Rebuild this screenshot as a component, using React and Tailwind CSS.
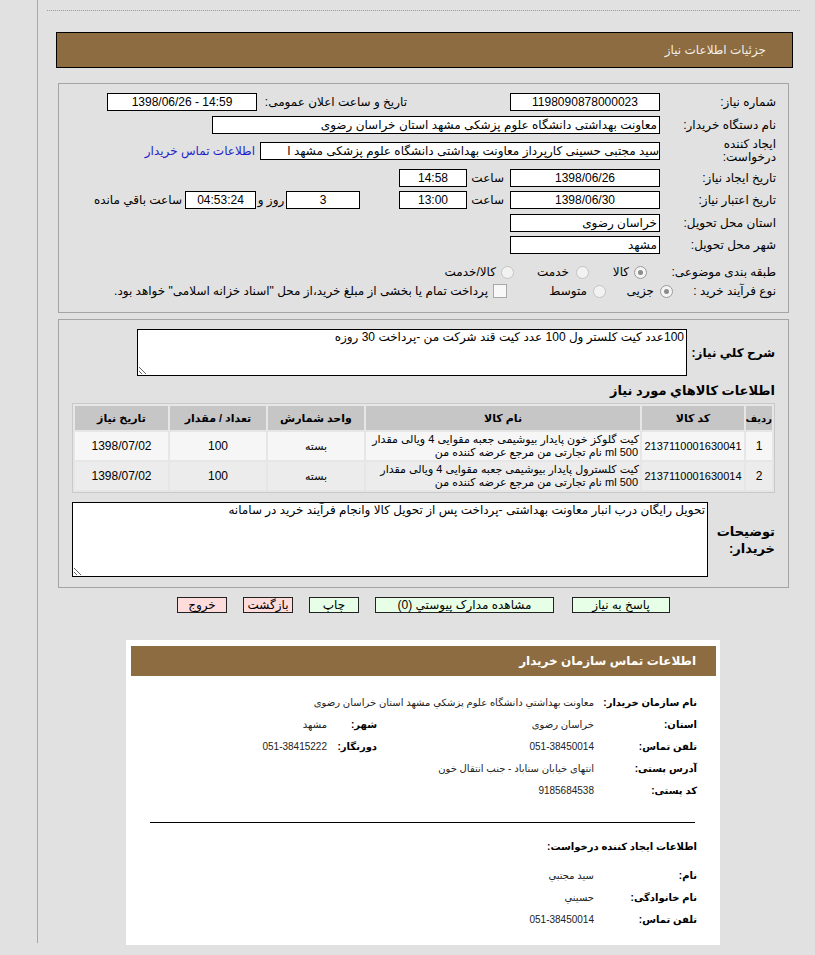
import React from 'react';

const Box = ({ w, className = '', children }) => (
  <div className={`h-[18px] shrink-0 border border-black bg-white flex items-center whitespace-nowrap overflow-hidden ${w} ${className}`}>
    {children}
  </div>
);

const Radio = ({ checked }) => (
  <span className={`w-[13px] h-[13px] shrink-0 rounded-full border flex items-center justify-center ${checked ? 'border-[#9a9a9a] bg-[#f4f4f4]' : 'border-[#c4c4c4] bg-[#f2f2f2]'}`}>
    {checked && <span className="w-[5px] h-[5px] rounded-full bg-[#8c8c8c]" />}
  </span>
);

const items = [
  {
    n: '1',
    code: '2137110001630041',
    l1: 'کیت گلوکز خون پایدار بیوشیمی جعبه مقوایی 4 ویالی مقدار',
    l2: '500 ml نام تجارتی من مرجع عرضه کننده من',
    bg: 'bg-[#f6f6f6]',
  },
  {
    n: '2',
    code: '2137110001630014',
    l1: 'کیت کلسترول پایدار بیوشیمی جعبه مقوایی 4 ویالی مقدار',
    l2: '500 ml نام تجارتی من مرجع عرضه کننده من',
    bg: 'bg-[#ececec]',
  },
];

const Btn = ({ w, pink, children }) => (
  <div className={`h-[16px] shrink-0 border border-[#222] flex items-center justify-center text-[12px] leading-[14px] ${w} ${pink ? 'bg-[#ffdcdc]' : 'bg-[#e6ffe6]'}`}>
    {children}
  </div>
);

const InfoRow = ({ label, value, label2, value2 }) => (
  <div className="h-[22px] flex items-center">
    <div className="w-[103px] shrink-0 text-[10px] font-bold text-black whitespace-nowrap">{label}</div>
    <div className="w-[217px] shrink-0 text-[10px] text-[#222] whitespace-nowrap">{value}</div>
    {label2 && <div className="w-[50px] shrink-0 text-[10px] font-bold text-black whitespace-nowrap">{label2}</div>}
    {value2 && <div className="text-[10px] text-[#222] whitespace-nowrap">{value2}</div>}
  </div>
);

export default function App() {
  return (
    <div className="w-[815px] h-[955px] flex bg-[#e1e1e1] overflow-hidden text-[12px] text-black font-['Liberation_Sans','DejaVu_Sans',sans-serif]">
      <div className="w-[37px] shrink-0" />
      <div className="w-[1px] h-[943px] shrink-0 bg-[#a8a8a8]" />
      <div className="flex-1">
        {/* dotted rule */}
        <div className="mt-[10px] ml-[9px] w-[753px] border-t border-dotted border-[#9c9c9c]" />

        {/* title bar */}
        <div dir="rtl" className="mt-[21px] ml-[18px] w-[737px] h-[36px] border border-black bg-[#8c6c40] flex items-center pr-[26px] text-[12px] text-[#f2efe8]">
          جزئیات اطلاعات نیاز
        </div>

        {/* main form */}
        <div dir="rtl" className="mt-[15px] ml-[20px] w-[731px] h-[230px] border border-[#a4a4a4] pr-[12px] pt-[9px]">
          <div className="h-[18px] flex items-center">
            <div className="w-[116px] shrink-0">شماره نیاز:</div>
            <Box w="w-[150px]" className="justify-center">1198090878000023</Box>
            <div className="w-[150px] shrink-0 mr-[103px]">تاریخ و ساعت اعلان عمومی:</div>
            <Box w="w-[150px]" className="justify-center">
              <span dir="ltr">1398/06/26 - 14:59</span>
            </Box>
          </div>

          <div className="mt-[5px] h-[18px] flex items-center">
            <div className="w-[116px] shrink-0">نام دستگاه خریدار:</div>
            <Box w="w-[448px]" className="px-[2px]">معاونت بهداشتی دانشگاه علوم پزشکی مشهد استان خراسان رضوی</Box>
          </div>

          <div className="mt-[4px] h-[26px] flex items-center">
            <div className="w-[116px] shrink-0 leading-[13px]">
              ایجاد کننده
              <br />
              درخواست:
            </div>
            <Box w="w-[400px]">
              <span className="shrink-0">سید مجتبی حسینی کارپرداز معاونت بهداشتی دانشگاه علوم پزشکی مشهد ا</span>
            </Box>
            <span className="mr-[5px] text-[#1f1fc8] whitespace-nowrap">اطلاعات تماس خریدار</span>
          </div>

          <div className="mt-[5px] h-[18px] flex items-center">
            <div className="w-[116px] shrink-0">تاریخ ایجاد نیاز:</div>
            <Box w="w-[150px]" className="justify-center">1398/06/26</Box>
            <div className="w-[43px] shrink-0 pr-[6px]">ساعت</div>
            <Box w="w-[68px]" className="justify-center">14:58</Box>
          </div>

          <div className="mt-[4px] h-[18px] flex items-center">
            <div className="w-[116px] shrink-0">تاریخ اعتبار نیاز:</div>
            <Box w="w-[150px]" className="justify-center">1398/06/30</Box>
            <div className="w-[43px] shrink-0 pr-[6px]">ساعت</div>
            <Box w="w-[68px]" className="justify-center">13:00</Box>
            <Box w="w-[74px]" className="mr-[39px] justify-center">3</Box>
            <div className="w-[30px] shrink-0 text-center">روز و</div>
            <Box w="w-[71px]" className="justify-center bg-[#efecc9]">04:53:24</Box>
            <span className="mr-[3px] whitespace-nowrap">ساعت باقي مانده</span>
          </div>

          <div className="mt-[5px] h-[18px] flex items-center">
            <div className="w-[116px] shrink-0">استان محل تحویل:</div>
            <Box w="w-[150px]" className="px-[2px]">خراسان رضوی</Box>
          </div>

          <div className="mt-[4px] h-[18px] flex items-center">
            <div className="w-[116px] shrink-0">شهر محل تحویل:</div>
            <Box w="w-[150px]" className="px-[2px]">مشهد</Box>
          </div>

          <div className="mt-[9px] h-[18px] flex items-center">
            <div className="w-[116px] shrink-0">طبقه بندی موضوعی:</div>
            <div className="w-[65px] shrink-0 pr-[13px] flex items-center gap-[5px]">
              <Radio checked />
              <span>کالا</span>
            </div>
            <div className="w-[75px] shrink-0 pr-[6px] flex items-center gap-[7px]">
              <Radio />
              <span>خدمت</span>
            </div>
            <div className="shrink-0 pr-[6px] flex items-center gap-[5px]">
              <Radio />
              <span>کالا/خدمت</span>
            </div>
          </div>

          <div className="mt-[1px] h-[18px] flex items-center">
            <div className="w-[103px] shrink-0">نوع فرآیند خرید :</div>
            <div className="w-[67px] shrink-0 flex items-center gap-[6px]">
              <Radio checked />
              <span>جزیی</span>
            </div>
            <div className="w-[99px] shrink-0 flex items-center gap-[6px]">
              <Radio />
              <span>متوسط</span>
            </div>
            <span className="w-[14px] h-[14px] shrink-0 border border-[#a8a8a8] bg-[#f8f8f8]" />
            <span className="mr-[5px] whitespace-nowrap">پرداخت تمام یا بخشی از مبلغ خرید،از محل "اسناد خزانه اسلامی" خواهد بود.</span>
          </div>
        </div>

        {/* description + items */}
        <div dir="rtl" className="mt-[6px] ml-[20px] w-[731px] h-[269px] border border-[#a4a4a4] pr-[13px] pt-[9px]">
          <div className="flex items-center">
            <div className="w-[88px] shrink-0 text-[12px] font-bold whitespace-nowrap">شرح کلي نياز:</div>
            <textarea
              readOnly
              dir="rtl"
              className="w-[550px] h-[47px] border border-black bg-white px-[2px] py-0 text-[12px] leading-[15px] outline-none"
              defaultValue="100عدد کیت کلستر ول 100 عدد کیت قند شرکت من -پرداخت 30 روزه"
            />
          </div>

          <div className="mt-[7px] h-[16px] text-[13px] font-bold leading-[16px]">اطلاعات کالاهاي مورد نياز</div>

          <table className="mt-[4px] w-[703px] table-fixed border-separate border-spacing-[2px] border border-[#c9c9c9] bg-[#e6e6e6] text-center">
            <colgroup>
              <col className="w-[26px]" />
              <col className="w-[102px]" />
              <col className="w-[274px]" />
              <col className="w-[96px]" />
              <col className="w-[96px]" />
              <col />
            </colgroup>
            <thead>
              <tr className="h-[24px] bg-[#c6c6c6] text-[11px] font-bold">
                <th className="text-[10px] whitespace-nowrap overflow-hidden">ردیف</th>
                <th>کد کالا</th>
                <th>نام کالا</th>
                <th>واحد شمارش</th>
                <th>تعداد / مقدار</th>
                <th>تاریخ نیاز</th>
              </tr>
            </thead>
            <tbody>
              {items.map((it) => (
                <tr key={it.n} className={`h-[28px] ${it.bg}`}>
                  <td>{it.n}</td>
                  <td className="text-[11px]">{it.code}</td>
                  <td className="text-right pr-[1px] text-[11px] leading-[13px] whitespace-nowrap overflow-hidden">
                    {it.l1}
                    <br />
                    <span className="pr-[1px]">{it.l2}</span>
                  </td>
                  <td className="text-[11px]">بسته</td>
                  <td>100</td>
                  <td>1398/07/02</td>
                </tr>
              ))}
            </tbody>
          </table>

          <div className="mt-[9px] flex items-center">
            <div className="w-[67px] shrink-0 text-[13px] font-bold leading-[17px]">
              توضیحات
              <br />
              خریدار:
            </div>
            <textarea
              readOnly
              dir="rtl"
              className="w-[636px] h-[75px] border border-black bg-white px-[2px] py-0 text-[12px] leading-[15px] outline-none"
              defaultValue="تحویل رایگان درب انبار معاونت بهداشتی -پرداخت پس از تحویل کالا وانجام فرآیند خرید در سامانه"
            />
          </div>
        </div>

        {/* actions */}
        <div dir="rtl" className="mt-[9px] ml-[20px] w-[731px] flex justify-center">
          <Btn w="w-[98px]">پاسخ به نیاز</Btn>
          <div className="w-[18px] shrink-0" />
          <Btn w="w-[179px]">مشاهده مدارک پیوستي (0)</Btn>
          <div className="w-[16px] shrink-0" />
          <Btn w="w-[50px]">چاپ</Btn>
          <div className="w-[16px] shrink-0" />
          <Btn w="w-[50px]" pink>بازگشت</Btn>
          <div className="w-[16px] shrink-0" />
          <Btn w="w-[50px]" pink>خروج</Btn>
        </div>

        {/* buyer contact card */}
        <div dir="rtl" className="mt-[27px] ml-[88px] w-[594px] h-[305px] bg-white pt-[6px] pr-[4px] pl-[5px]">
          <div className="h-[30px] bg-[#8c6c40] flex items-center pr-[20px] text-[12px] font-bold text-white">
            اطلاعات تماس سازمان خریدار
          </div>
          <div className="mt-[15px] pr-[19px]">
            <InfoRow label="نام سازمان خریدار:" value="معاونت بهداشتي دانشگاه علوم پزشكي مشهد استان خراسان رضوی" />
            <InfoRow label="استان:" value="خراسان رضوی" label2="شهر:" value2="مشهد" />
            <InfoRow label="تلفن تماس:" value="051-38450014" label2="دورنگار:" value2="051-38415222" />
            <InfoRow label="آدرس پستی:" value="انتهای خیابان سناباد - جنب انتقال خون" />
            <InfoRow label="کد پستی:" value="9185684538" />
          </div>
          <div className="mt-[21px] mr-[21px] w-[545px] border-t border-black" />
          <div className="mt-[12px] pr-[19px] h-[22px] flex items-center text-[10px] font-bold">
            اطلاعات ایجاد کننده درخواست:
          </div>
          <div className="mt-[7px] pr-[19px]">
            <InfoRow label="نام:" value="سيد مجتبي" />
            <InfoRow label="نام خانوادگی:" value="حسيني" />
            <InfoRow label="تلفن تماس:" value="051-38450014" />
          </div>
        </div>
      </div>
    </div>
  );
}
